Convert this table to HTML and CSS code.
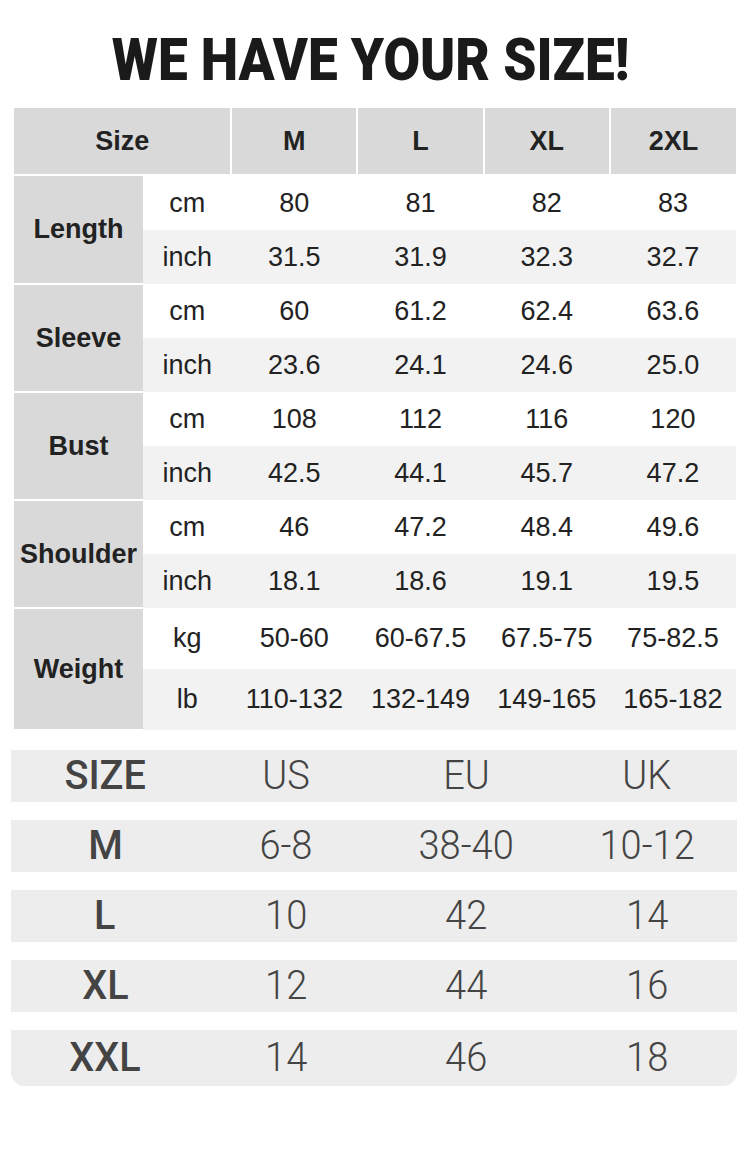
FILE: index.html
```html
<!DOCTYPE html>
<html>
<head>
<meta charset="utf-8">
<link rel="stylesheet" href="styles.css">
</head>
<body>
<div class="page">
  <h1 class="title"><span>WE HAVE YOUR SIZE!</span></h1>
  <table class="chart">
    <colgroup>
      <col class="c-label"><col class="c-unit"><col class="c-m"><col class="c-m"><col class="c-m"><col class="c-m">
    </colgroup>
    <thead>
      <tr><th colspan="2">Size</th><th>M</th><th>L</th><th>XL</th><th>2XL</th></tr>
    </thead>
    <tbody>
      <tr class="r-cm"><th rowspan="2" class="lab">Length</th><td>cm</td><td>80</td><td>81</td><td>82</td><td>83</td></tr>
      <tr class="r-in"><td>inch</td><td>31.5</td><td>31.9</td><td>32.3</td><td>32.7</td></tr>
      <tr class="r-cm"><th rowspan="2" class="lab">Sleeve</th><td>cm</td><td>60</td><td>61.2</td><td>62.4</td><td>63.6</td></tr>
      <tr class="r-in"><td>inch</td><td>23.6</td><td>24.1</td><td>24.6</td><td>25.0</td></tr>
      <tr class="r-cm"><th rowspan="2" class="lab">Bust</th><td>cm</td><td>108</td><td>112</td><td>116</td><td>120</td></tr>
      <tr class="r-in"><td>inch</td><td>42.5</td><td>44.1</td><td>45.7</td><td>47.2</td></tr>
      <tr class="r-cm"><th rowspan="2" class="lab">Shoulder</th><td>cm</td><td>46</td><td>47.2</td><td>48.4</td><td>49.6</td></tr>
      <tr class="r-in"><td>inch</td><td>18.1</td><td>18.6</td><td>19.1</td><td>19.5</td></tr>
      <tr class="r-cm r-tall"><th rowspan="2" class="lab">Weight</th><td>kg</td><td>50-60</td><td>60-67.5</td><td>67.5-75</td><td>75-82.5</td></tr>
      <tr class="r-in r-tall"><td>lb</td><td>110-132</td><td>132-149</td><td>149-165</td><td>165-182</td></tr>
    </tbody>
  </table>

  <div class="conv">
    <div class="crow"><span class="sz"><i>SIZE</i></span><span class="num"><i>US</i></span><span class="num"><i>EU</i></span><span class="num"><i>UK</i></span></div>
    <div class="crow"><span class="sz"><i>M</i></span><span class="num"><i>6-8</i></span><span class="num"><i>38-40</i></span><span class="num"><i>10-12</i></span></div>
    <div class="crow"><span class="sz"><i>L</i></span><span class="num"><i>10</i></span><span class="num"><i>42</i></span><span class="num"><i>14</i></span></div>
    <div class="crow"><span class="sz"><i>XL</i></span><span class="num"><i>12</i></span><span class="num"><i>44</i></span><span class="num"><i>16</i></span></div>
    <div class="crow last"><span class="sz"><i>XXL</i></span><span class="num"><i>14</i></span><span class="num"><i>46</i></span><span class="num"><i>18</i></span></div>
  </div>
</div>
</body>
</html>
```

FILE: styles.css
```css
html, body {
  margin: 0;
  padding: 0;
  background: #fff;
}
.page {
  width: 750px;
  height: 1155px;
  padding-top: 25px;
  box-sizing: border-box;
}
.title {
  margin: 0 0 13px;
  height: 70px;
  line-height: 70px;
  text-align: center;
  font-family: Roboto, sans-serif;
  font-weight: 900;
  font-size: 59px;
  color: #1a1a1a;
  padding-right: 9px;
}
.title span {
  display: inline-block;
  transform: scaleX(0.9);
  white-space: nowrap;
}
.chart {
  margin-left: 14px;
  width: 722px;
  border-collapse: collapse;
  table-layout: fixed;
  font-family: "Liberation Sans", Arial, sans-serif;
  font-size: 27px;
  color: #222;
}
.c-label { width: 129px; }
.c-unit { width: 88px; }
.c-m { width: 126px; }
.chart th, .chart td {
  padding: 0;
  text-align: center;
  vertical-align: middle;
}
.chart thead th {
  height: 66px;
  background: #d9d9d9;
  font-weight: 700;
  border-left: 2px solid #fff;
  border-bottom: 2px solid #fff;
}
.chart thead th:first-child { border-left: 0; }
.chart th.lab {
  background: #d9d9d9;
  font-weight: 700;
  border-bottom: 2px solid #fff;
}
.chart td { height: 54px; }
.r-cm td { background: #fff; }
.r-in td { background: #f2f2f2; }
.r-tall td { height: 61px; }
.chart tbody tr:last-child th.lab { border-bottom: 0; }
.conv {
  margin: 19px 13px 0 11px;
  display: flex;
  flex-direction: column;
  gap: 18px;
}
.crow {
  height: 52px;
  background: #ededed;
  display: grid;
  grid-template-columns: repeat(4, 1fr);
  align-items: center;
  font-family: Roboto, sans-serif;
  color: #444;
  font-size: 40px;
  line-height: 52px;
  padding-left: 4px;
}
.crow.last {
  height: 56px;
  border-radius: 0 0 14px 14px;
}
.crow span {
  text-align: center;
}
.crow i {
  font-style: normal;
  display: inline-block;
  transform: scaleX(0.95);
}
.crow .sz { font-weight: 500; }
.crow .sz i { transform: scaleX(0.99); }
.crow .num { font-weight: 300; }
```
